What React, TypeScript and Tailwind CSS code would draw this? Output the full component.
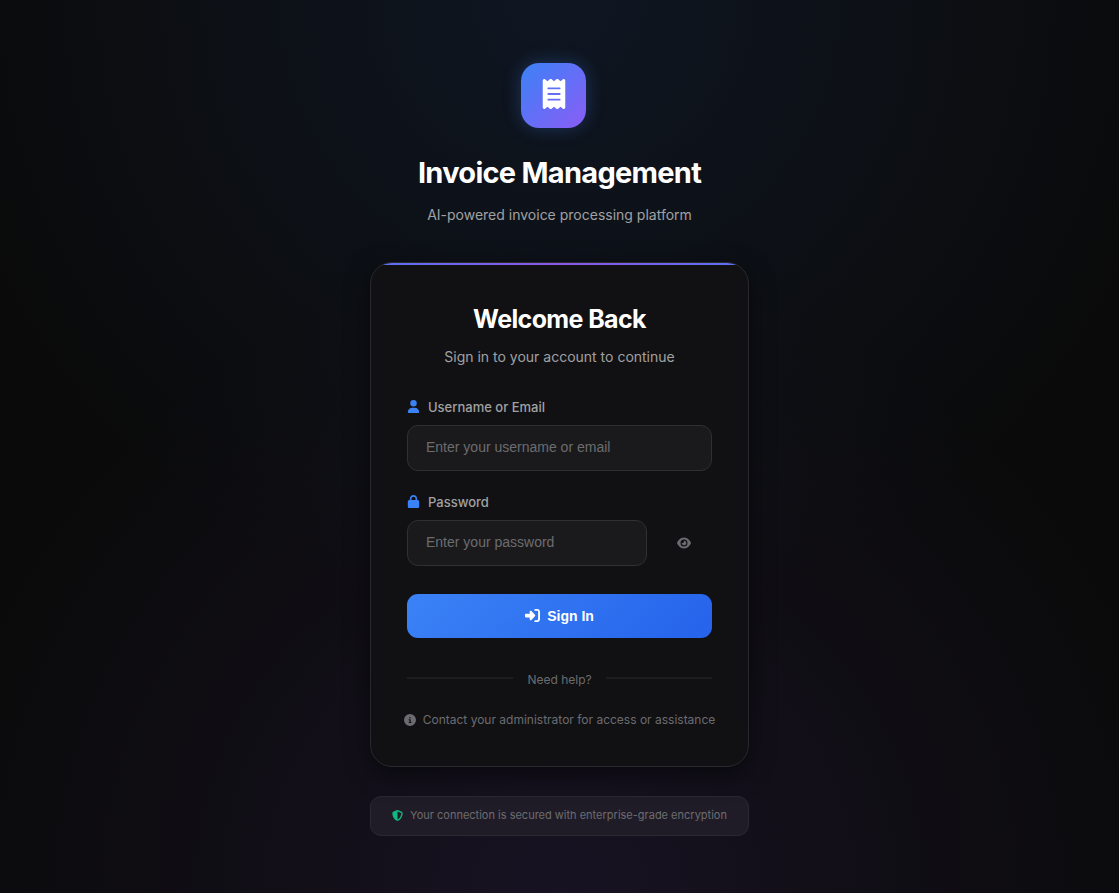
import { useState } from "react";
import {
  FaCircleInfo,
  FaEye,
  FaLock,
  FaReceipt,
  FaRightToBracket,
  FaShieldHalved,
  FaUser,
} from "react-icons/fa6";

const inputStyle =
  "h-[46px] min-w-0 flex-1 rounded-[11px] border border-[#303032] bg-[#1a1a1c] px-[18px] pb-[3px] font-['Liberation_Sans',Arial,sans-serif] text-sm text-white outline-none placeholder:text-[#6c6c70] focus:border-[#3b82f6]";

const labelStyle =
  "flex items-center gap-2 text-[13px] leading-5 font-medium text-[#a1a1a3]";

export default function App() {
  const [visible, setVisible] = useState(false);

  return (
    <main className="flex min-h-screen flex-col items-center bg-[#0a0a0a] bg-[radial-gradient(circle_at_top,rgba(59,130,246,0.1)_0%,transparent_60%),radial-gradient(circle_at_bottom,rgba(139,92,246,0.1)_0%,transparent_60%)] px-4 pt-[63px] pb-14 font-[Inter,sans-serif]">
      <div className="w-full max-w-[379px]">
        <header className="flex flex-col items-center text-center">
          <div className="pr-3">
            <div className="flex size-[65px] items-center justify-center rounded-[18px] bg-[linear-gradient(135deg,#3b82f6,#8b5cf6)] pb-1 text-white shadow-[0_0_18px_rgba(59,130,246,0.3)]">
              <FaReceipt className="size-[30px]" aria-hidden="true" />
            </div>
          </div>
          <h1 className="mt-6 text-[29px] leading-[42px] font-bold tracking-tight text-white">
            Invoice Management
          </h1>
          <p className="mt-[9px] text-sm leading-6 text-[#a1a1a3]">
            AI-powered invoice processing platform
          </p>
        </header>

        <section className="relative mt-[35px] overflow-hidden rounded-[22px] border border-[#29292b] bg-[#111113] px-9 pt-[37px] pb-9 shadow-[0_8px_24px_rgba(0,0,0,0.5)]">
          <div className="absolute inset-x-0 top-0 h-[2px] bg-[linear-gradient(90deg,#5b72f5,#8b58e6,#5b72f5)]" />
          <h2 className="text-center text-[25px] leading-[38px] font-bold tracking-tight text-white">
            Welcome Back
          </h2>
          <p className="mt-[7px] text-center text-sm leading-6 text-[#a1a1a3]">
            Sign in to your account to continue
          </p>

          <form className="mt-7" onSubmit={(event) => event.preventDefault()}>
            <label htmlFor="username" className={labelStyle}>
              <FaUser className="mb-[2px] size-[13px] text-[#3b82f6]" aria-hidden="true" />
              Username or Email
            </label>
            <div className="mt-2 flex">
              <input id="username" type="text" placeholder="Enter your username or email" className={inputStyle} />
            </div>

            <label htmlFor="password" className={`mt-[21px] ${labelStyle}`}>
              <FaLock className="mb-[2px] size-[13px] text-[#3b82f6]" aria-hidden="true" />
              Password
            </label>
            <div className="mt-2 flex items-center">
              <input
                id="password"
                type={visible ? "text" : "password"}
                placeholder="Enter your password"
                className={inputStyle}
              />
              <button
                type="button"
                aria-label="Show password"
                onClick={() => setVisible(!visible)}
                className="flex h-[46px] w-[65px] items-center justify-center pl-2 text-[#6c6c70]"
              >
                <FaEye className="size-[14px]" />
              </button>
            </div>

            <button
              type="submit"
              className="mt-7 flex h-11 w-full items-center justify-center gap-[7px] rounded-[11px] bg-[linear-gradient(135deg,#3b82f6,#2563eb)] font-['Liberation_Sans',Arial,sans-serif] text-sm font-semibold text-white"
            >
              <FaRightToBracket className="mb-[2px] size-[15px]" aria-hidden="true" />
              Sign In
            </button>
          </form>

          <div className="mt-8 flex items-center gap-[14px] text-xs leading-5 text-[#6c6c70]">
            <span className="mb-1 h-[2px] flex-1 bg-[#1d1d1f]" />
            Need help?
            <span className="mb-1 h-[2px] flex-1 bg-[#1d1d1f]" />
          </div>
          <p className="mt-5 flex items-center justify-center gap-[7px] text-xs leading-5 whitespace-nowrap text-[#6c6c70]">
            <FaCircleInfo className="size-3 shrink-0" aria-hidden="true" />
            Contact your administrator for access or assistance
          </p>
        </section>

        <footer className="mt-[29px] flex h-10 items-center justify-center gap-[7px] rounded-[11px] border border-[#2b2831] bg-[#201c27] pb-[2px] text-[11px] leading-4 text-[#6c6c70]">
          <FaShieldHalved className="size-[11px] text-[#10b981]" aria-hidden="true" />
          Your connection is secured with enterprise-grade encryption
        </footer>
      </div>
    </main>
  );
}
